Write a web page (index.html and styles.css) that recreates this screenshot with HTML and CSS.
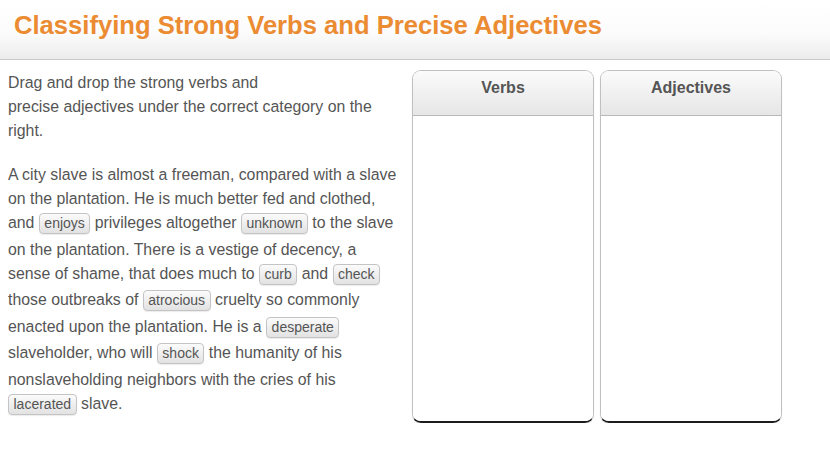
FILE: index.html
```html
<!DOCTYPE html>
<html>
<head>
<meta charset="utf-8">
<link rel="stylesheet" href="styles.css">
</head>
<body>
<header class="topbar"><h1 class="title">Classifying Strong Verbs and Precise Adjectives</h1></header>
<main class="content">
  <section class="passage">
    <p class="intro">Drag and drop the strong verbs and<br>precise adjectives under the correct category on the right.</p>
    <p class="text">A city slave is almost a freeman, compared with a slave on the plantation. He is much better fed and clothed, and <span class="chip">enjoys</span> privileges altogether <span class="chip">unknown</span> to the slave on the plantation. There is a vestige of decency, a sense of shame, that does much to <span class="chip">curb</span> and <span class="chip">check</span> those outbreaks of <span class="chip">atrocious</span> cruelty so commonly enacted upon the plantation. He is a <span class="chip">desperate</span> slaveholder, who will <span class="chip">shock</span> the humanity of his nonslaveholding neighbors with the cries of his <span class="chip">lacerated</span> slave.</p>
  </section>
  <section class="bins">
    <div class="bin"><div class="bin-head">Verbs</div><div class="bin-body"></div></div>
    <div class="bin"><div class="bin-head">Adjectives</div><div class="bin-body"></div></div>
  </section>
</main>
</body>
</html>
```
FILE: styles.css
```css
html, body { margin: 0; padding: 0; background: #fff; }
body { font-family: "Liberation Sans", Arial, sans-serif; color: #555; }
.topbar {
  box-sizing: border-box;
  height: 60px;
  padding: 10px 14px 0;
  background: linear-gradient(#ffffff 0%, #fcfcfc 55%, #ececec 100%);
  border-bottom: 1px solid #c8c8c8;
}
.title {
  margin: 0;
  font-size: 25.6px;
  font-weight: bold;
  color: #eb8b32;
  line-height: 30px;
}
.content {
  display: flex;
  padding: 10px 8px 0;
  gap: 12px;
}
.passage { width: 392px; padding-top: 1px; font-size: 15.85px; line-height: 24px; }
.passage p { margin: 0; }
.intro { margin-bottom: 20px !important; }
.chip {
  display: inline-block;
  font-size: 14px;
  line-height: 17px;
  padding: 1px 4.5px;
  margin-bottom: 3.5px;
  border: 1px solid #c4c4c4;
  border-radius: 4px;
  background: linear-gradient(#fbfbfb, #e2e2e2);
  color: #555;
  box-shadow: 0 1px 1px rgba(0,0,0,0.08);
}
.bins { display: flex; gap: 6px; }
.bin {
  width: 182px;
  height: 353px;
  box-sizing: border-box;
  border: 1px solid #c0c0c0;
  border-bottom: 2px solid #1c1c1c;
  border-radius: 9px;
  box-shadow: 0 1px 1px rgba(0,0,0,0.15);
  display: flex;
  flex-direction: column;
  overflow: hidden;
}
.bin-head {
  height: 45px;
  box-sizing: border-box;
  border-bottom: 1px solid #b8b8b8;
  background: linear-gradient(#fbfbfb, #e6e6e6);
  text-align: center;
  font-weight: bold;
  font-size: 16px;
  padding-top: 8px;
  color: #555;
}
.bin-body { flex: 1; background: #fff; }
```
